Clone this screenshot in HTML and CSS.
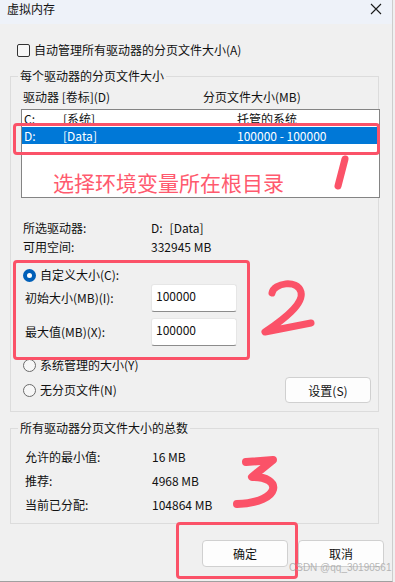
FILE: index.html
```html
<!DOCTYPE html>
<html lang="zh-CN">
<head>
<meta charset="utf-8">
<title>虚拟内存</title>
<link rel="stylesheet" href="styles.css">
</head>
<body>
<div class="window">
  <div class="titlebar">
    <span class="title">虚拟内存</span>
    <svg class="close" width="12" height="12" viewBox="0 0 12 12"><path d="M1 1 L11 11 M11 1 L1 11" stroke="#1a1a1a" stroke-width="1.1" fill="none"/></svg>
  </div>

  <div class="main">
    <div class="check-row">
      <span class="checkbox"></span>
      <span>自动管理所有驱动器的分页文件大小(A)</span>
    </div>

    <div class="group group-drives">
      <div class="group-title">每个驱动器的分页文件大小</div>
      <div class="list-head">
        <span>驱动器 [卷标](D)</span>
        <span>分页文件大小(MB)</span>
      </div>
      <div class="listbox">
        <div class="list-row">
          <span>C:</span><span>[系统]</span><span>托管的系统</span>
        </div>
        <div class="list-row selected">
          <span>D:</span><span>[Data]</span><span>100000 - 100000</span>
        </div>
      </div>

      <div class="info">
        <span>所选驱动器:</span><span>D:<span class="vol">[Data]</span></span>
        <span>可用空间:</span><span>332945 MB</span>
      </div>

      <div class="radio-row first">
        <span class="radio on"></span>
        <span>自定义大小(C):</span>
      </div>
      <div class="field-row">
        <span>初始大小(MB)(I):</span>
        <div class="input">100000</div>
      </div>
      <div class="field-row second">
        <span>最大值(MB)(X):</span>
        <div class="input">100000</div>
      </div>
      <div class="radio-row sys">
        <span class="radio"></span>
        <span>系统管理的大小(Y)</span>
      </div>
      <div class="radio-row none">
        <span class="radio"></span>
        <span class="grow">无分页文件(N)</span>
        <button class="btn btn-set">设置(S)</button>
      </div>
    </div>

    <div class="group group-total">
      <div class="group-title">所有驱动器分页文件大小的总数</div>
      <div class="totals">
        <span>允许的最小值:</span><span>16 MB</span>
        <span>推荐:</span><span>4968 MB</span>
        <span>当前已分配:</span><span>104864 MB</span>
      </div>
    </div>

    <div class="actions">
      <button class="btn">确定</button>
      <button class="btn">取消</button>
    </div>
  </div>

  <div class="mark mark-1"></div>
  <div class="mark mark-2"></div>
  <div class="mark mark-3"></div>
  <div class="note">选择环境变量所在根目录</div>
  <svg class="scribble" width="395" height="582" viewBox="0 0 395 582">
    <g fill="none" stroke="#fb5268" stroke-linecap="round" stroke-linejoin="round">
      <path d="M345 159 L338 186" stroke-width="7"/>
      <path d="M272 293 C274 283 297 279 301 292 C304 304 283 320 265 332 L311 323" stroke-width="7"/>
      <path d="M246 462 L273 460 L252 477 C282 476 283 502 237 504" stroke-width="8"/>
    </g>
  </svg>
  <div class="watermark">CSDN @qq_30190561</div>
</div>
</body>
</html>
```

FILE: styles.css
```css
* { box-sizing: border-box; }

html, body {
  margin: 0;
  padding: 0;
  background: #f0f0f0;
}

body {
  width: 395px;
  height: 582px;
  overflow: hidden;
  font-family: "Noto Sans CJK SC", "Noto Sans", "Liberation Sans", sans-serif;
  font-size: 12px;
  line-height: 16px;
  color: #111;
}

.window {
  position: relative;
  width: 393px;
  height: 582px;
  border-right: 1px solid #cdcdcd;
  border-bottom: 1px solid #a0a0a0;
  background: #f0f0f0;
}

.titlebar {
  height: 24px;
  background: #eef2f9;
  display: flex;
  justify-content: space-between;
  align-items: flex-start;
  padding: 0 10px 0 7px;
}

.title {
  line-height: 17px;
}

.close {
  margin-top: 3px;
}

.main {
  padding: 18px 0 0 0;
}

.check-row {
  display: flex;
  align-items: center;
  gap: 4px;
  padding-left: 17px;
  height: 16px;
}

.checkbox {
  width: 13px;
  height: 13px;
  border: 1px solid #333;
  border-radius: 2px;
  background: #f7f7f7;
}

.group {
  border: 1px solid #dcdcdc;
  margin-left: 10px;
  width: 369px;
  padding-left: 10px;
}

.group-drives {
  margin-top: 18px;
  padding-bottom: 8px;
}

.group-total {
  margin-top: 16px;
  padding-bottom: 10px;
}

.group-title {
  width: fit-content;
  margin: -9px 0 0 -3px;
  padding: 0 2px;
  background: #f0f0f0;
}

.list-head {
  display: grid;
  grid-template-columns: 180px auto;
  margin-top: 5px;
  padding-left: 2px;
}

.listbox {
  margin-top: 4px;
  margin-right: -2px;
  height: 89px;
  border: 1px solid #848484;
  background: #fff;
}

.list-row {
  display: grid;
  grid-template-columns: 39px 174px auto;
  height: 17px;
  line-height: 17px;
  padding-left: 2px;
}

.list-row.selected {
  background: #0078d7;
  color: #fff;
}

.info {
  display: grid;
  grid-template-columns: 128px auto;
  row-gap: 3px;
  margin-top: 22px;
  padding-left: 2px;
}

.vol {
  margin-left: 7px;
}

.radio-row {
  display: flex;
  align-items: center;
  gap: 4px;
  padding-left: 2px;
  height: 16px;
}

.radio-row.first { margin-top: 12px; }
.radio-row.sys { margin-top: 11px; }
.radio-row.none {
  margin-top: 4px;
  height: 26px;
  padding-right: 7px;
}

.grow { flex: 1; }

.radio {
  width: 13px;
  height: 13px;
  border-radius: 50%;
  border: 1px solid #6b6b6b;
  background: #f7f7f7;
}

.radio.on {
  border: 4px solid #005fb8;
  background: #fff;
}

.field-row {
  display: grid;
  grid-template-columns: 126px 86px;
  align-items: center;
  margin-top: 1px;
  padding-left: 4px;
}

.field-row.second { margin-top: 6px; }

.input {
  height: 28px;
  background: #fff;
  border: 1px solid #e6e6e6;
  border-bottom: 1px solid #8c8c8c;
  border-radius: 3px;
  padding: 3px 0 0 4px;
  color: #111;
}

.btn {
  font-family: inherit;
  font-size: 12px;
  color: #111;
  width: 86px;
  height: 26px;
  background: #fdfdfd;
  border: 1px solid #d0d0d0;
  border-radius: 4px;
  padding: 0;
}

.totals {
  display: grid;
  grid-template-columns: 127px auto;
  row-gap: 8px;
  margin-top: 13px;
  padding-left: 4px;
}

.actions {
  display: flex;
  gap: 10px;
  margin-top: 16px;
  padding-left: 202px;
}

.actions .btn {
  height: 27px;
}

/* annotations drawn over the dialog */
.mark {
  position: absolute;
  border: 3px solid #fb5268;
  border-radius: 4px;
}

.mark-1 { left: 13px; top: 123px; width: 367px; height: 32px; }
.mark-2 { left: 13px; top: 260px; width: 237px; height: 100px; }
.mark-3 { left: 176px; top: 522px; width: 122px; height: 57px; }

.note {
  position: absolute;
  left: 53px;
  top: 168px;
  font-size: 21px;
  line-height: 28px;
  color: #ff5a6e;
}

.scribble {
  position: absolute;
  left: 0;
  top: 0;
}

.watermark {
  position: absolute;
  left: 289px;
  top: 562px;
  white-space: nowrap;
  font-family: "Liberation Sans", sans-serif;
  font-size: 10px;
  line-height: 12px;
  color: rgba(165, 165, 165, 0.8);
}
```
